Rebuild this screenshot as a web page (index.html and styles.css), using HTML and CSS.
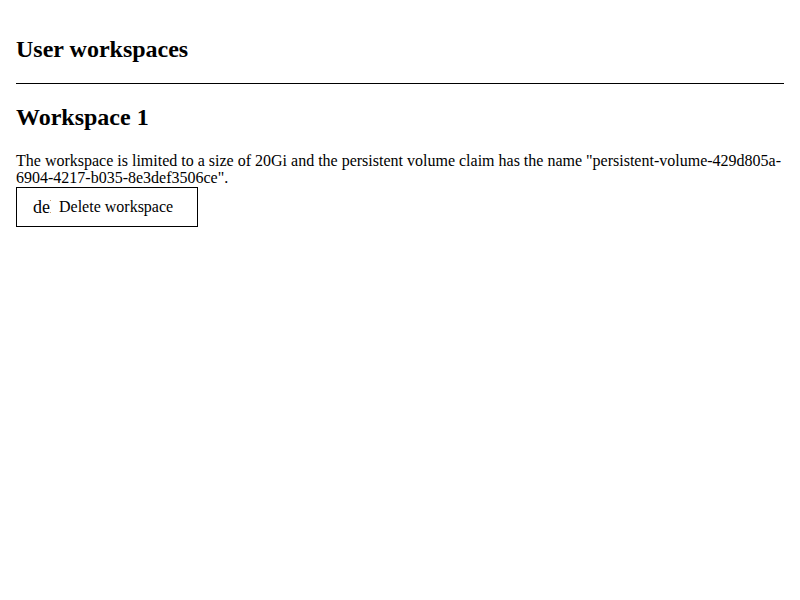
FILE: index.html
```html
<!DOCTYPE html>
<html>
<head>
<meta charset="utf-8">
<link rel="stylesheet" href="styles.css">
</head>
<body>
<div class="page">
  <h2 class="title">User workspaces</h2>
  <hr class="rule">
  <section class="workspace">
    <h2 class="ws-title">Workspace 1</h2>
    <div class="ws-desc">The workspace is limited to a size of 20Gi and the persistent volume claim has the name "persistent-volume-429d805a-6904-4217-b035-8e3def3506ce".</div>
    <button class="btn" type="button"><span class="icon">delete</span><span class="btn-label">Delete workspace</span></button>
  </section>
</div>
</body>
</html>
```
FILE: styles.css
```css
html, body {
  margin: 0;
  padding: 0;
  background: #fff;
}
body {
  font-family: "Liberation Serif", serif;
  font-size: 16px;
  color: #000;
}
.page {
  padding: 15px 16px 16px;
}
.title {
  font-size: 24px;
  font-weight: bold;
  margin: 20px 0;
  line-height: 28px;
}
.rule {
  border: 0;
  border-top: 1px solid #000;
  margin: 19px 0 0;
  height: 0;
}
.ws-title {
  font-size: 24px;
  font-weight: bold;
  margin: 19px 0 21px;
  line-height: 28px;
}
.ws-desc {
  line-height: 17px;
}
.btn {
  display: flex;
  align-items: center;
  gap: 8px;
  height: 40px;
  margin-top: 1px;
  padding: 0 24px 0 16px;
  border: 1px solid #000;
  background: #fff;
  font-family: "Liberation Serif", serif;
  font-size: 16px;
  color: #000;
  cursor: pointer;
}
.icon {
  display: block;
  width: 18px;
  overflow: hidden;
  white-space: nowrap;
  font-size: 18px;
  line-height: 18px;
}
```
